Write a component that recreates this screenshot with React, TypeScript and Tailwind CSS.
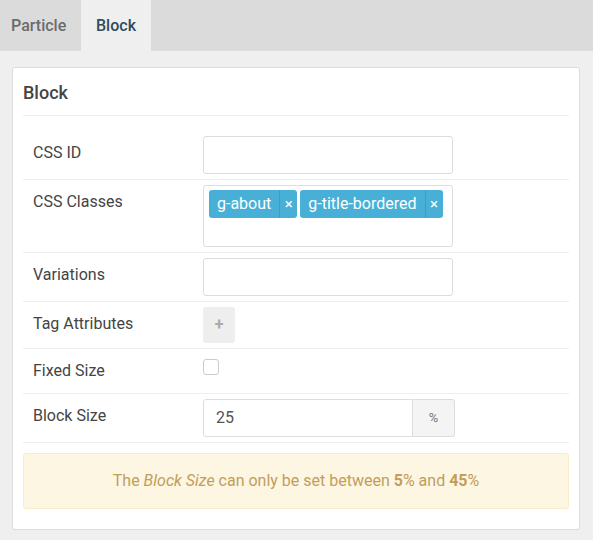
import React from 'react';

const labelCls = 'w-[180px] shrink-0 pl-[10px] leading-[34px] text-[16px] text-[#444]';
const inputCls = 'w-[250px] h-[38px] rounded-[3px] border border-[#ddd] bg-white';

function Row({ label, children }: { label: string; children: React.ReactNode }) {
  return (
    <div className="flex items-start border-b border-[#eee] py-[5px]">
      <div className={labelCls}>{label}</div>
      <div className="flex-1">{children}</div>
    </div>
  );
}

function Tag({ text }: { text: string }) {
  return (
    <div className="flex h-[28px] items-stretch rounded-[3px] bg-[#48b0d7] text-white">
      <span className="flex items-center px-[8px] text-[16px]">{text}</span>
      <span className="flex w-[18px] items-center justify-center border-l border-[#3c9cc2] text-[15px]">×</span>
    </div>
  );
}

export default function App() {
  return (
    <div className="min-h-[540px] bg-[#efefef] font-['Roboto',sans-serif]">
      <div className="flex h-[51px] bg-[#dbdbdb] text-[16px] font-medium">
        <div className="flex w-[81px] items-center pl-[11px] text-[#6b6b6b]">Particle</div>
        <div className="flex w-[70px] items-center justify-center bg-[#efefef] text-[#2f4b5e]">Block</div>
      </div>

      <div className="mx-[12px] mt-[16px] w-[568px] rounded-[3px] border border-[#dcdcdc] bg-white p-[10px]">
        <div className="border-b border-[#eee] pt-[2px] pb-[9px] text-[18px] font-medium leading-[26px] text-[#444]">
          Block
        </div>

        <div className="mt-[15px]">
          <Row label="CSS ID">
            <div className={inputCls} />
          </Row>
          <Row label="CSS Classes">
            <div className="flex h-[62px] w-[250px] items-start gap-[3px] rounded-[3px] border border-[#ddd] bg-white px-[5px] pt-[4px]">
              <Tag text="g-about" />
              <Tag text="g-title-bordered" />
            </div>
          </Row>
          <Row label="Variations">
            <div className={inputCls} />
          </Row>
          <Row label="Tag Attributes">
            <div className="flex h-[36px] w-[32px] items-center justify-center rounded-[3px] bg-[#eee] text-[16px] font-bold text-[#aaa]">
              +
            </div>
          </Row>
          <Row label="Fixed Size">
            <div className="mt-[5px] h-[16px] w-[16px] rounded-[3px] border border-[#ccc] bg-white" />
          </Row>
          <Row label="Block Size">
            <div className="flex h-[38px] w-[252px]">
              <div className="flex w-[210px] items-center rounded-l-[3px] border border-[#ddd] pl-[12px] text-[16px] text-[#555]">
                25
              </div>
              <div className="flex w-[42px] items-center justify-center rounded-r-[3px] border border-l-0 border-[#ddd] bg-[#f4f4f4] text-[13px] text-[#777]">
                %
              </div>
            </div>
          </Row>
        </div>

        <div className="mt-[10px] mb-[10px] flex h-[56px] items-center justify-center rounded-[3px] border border-[#f8ecc9] bg-[#fcf6e3] text-[16px] text-[#c29e5a]">
          <span>
            The <em>Block Size</em> can only be set between <strong>5</strong>% and <strong>45</strong>%
          </span>
        </div>
      </div>
    </div>
  );
}
